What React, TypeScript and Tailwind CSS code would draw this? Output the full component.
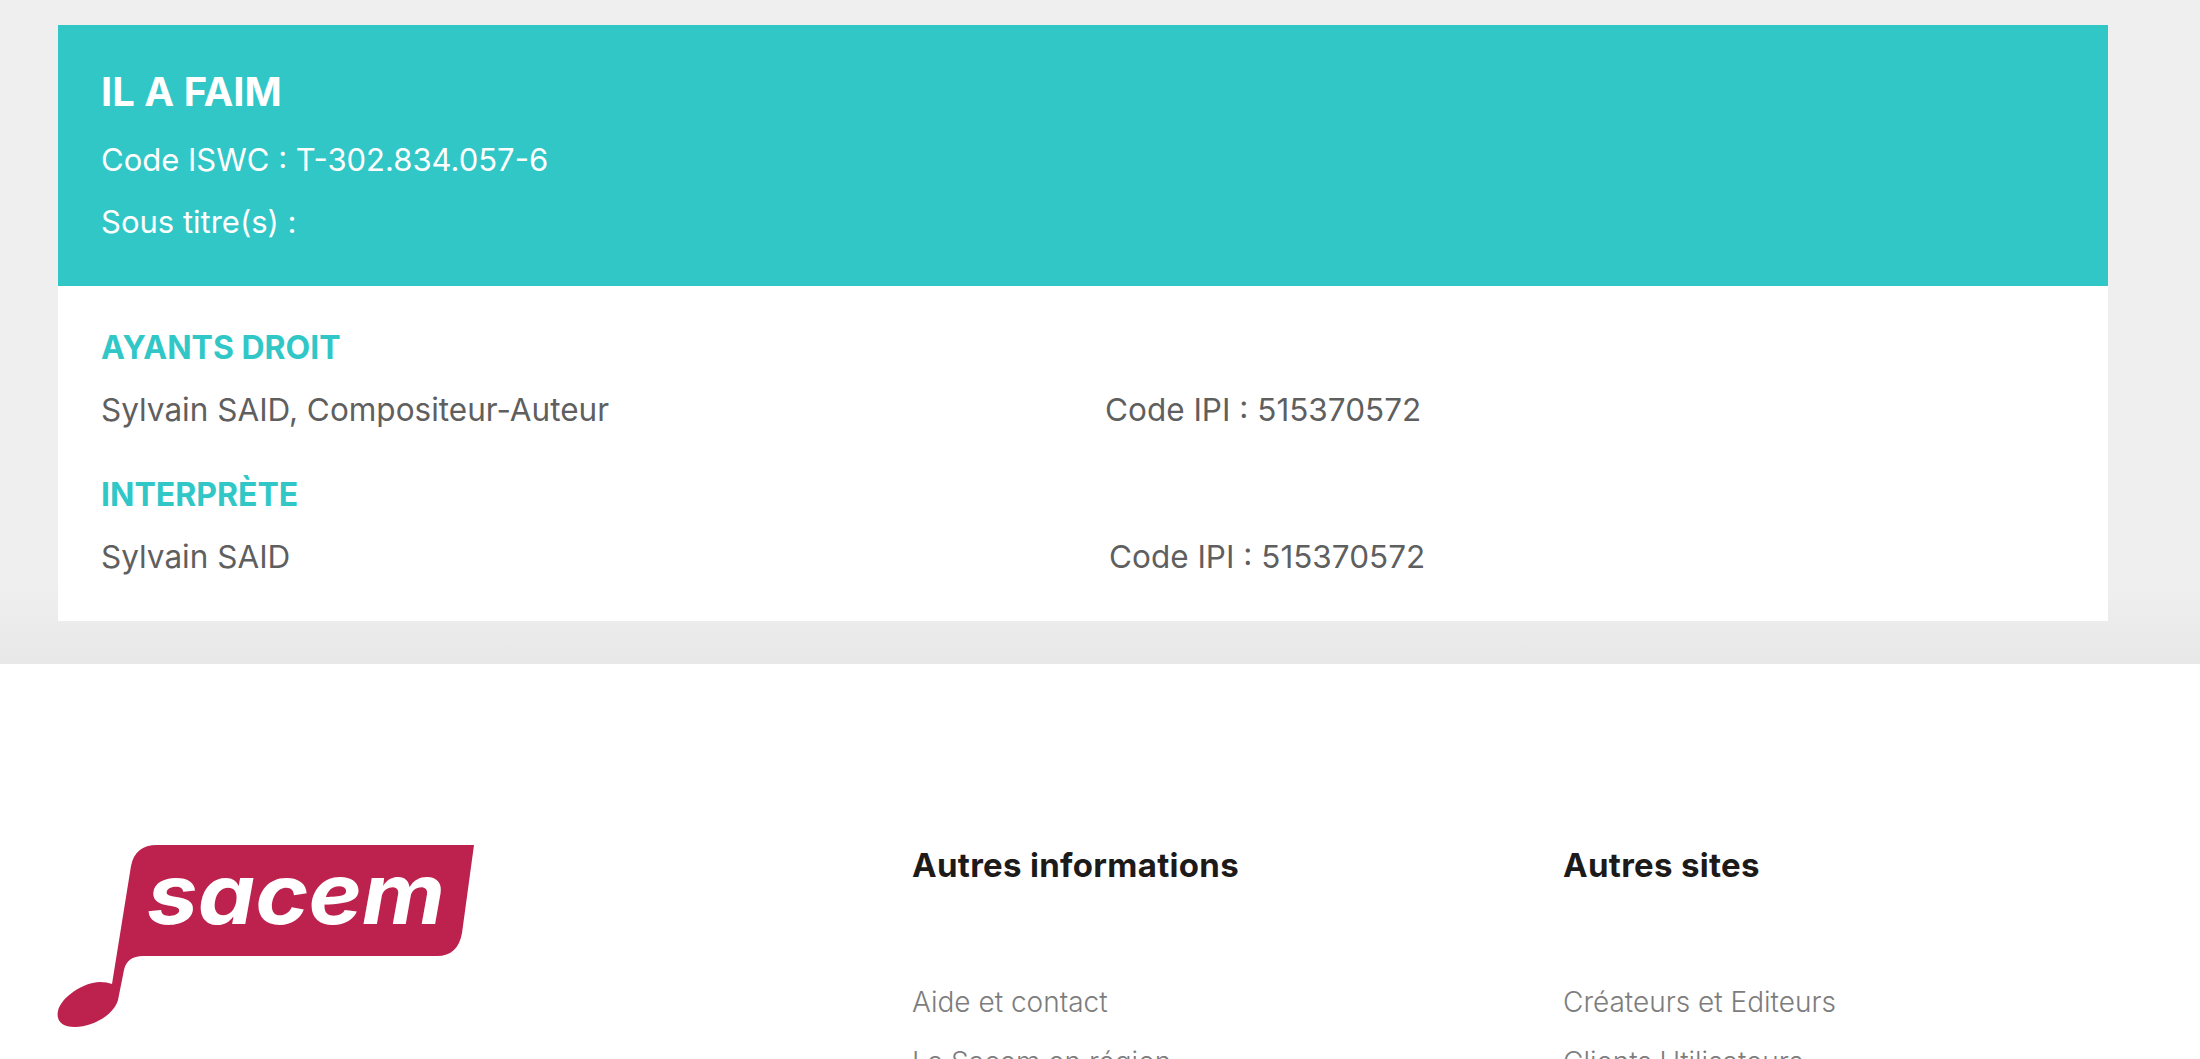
const sans = "font-['Inter','Liberation_Sans',sans-serif]";

function SacemLogo() {
  return (
    <svg width="418" height="183" viewBox="0 0 418 183" className="block overflow-visible">
      <path
        d="M100 0 H417 L405 88 Q401 111 380 111 H86 Q70 111 67 125 L61 155 C57 170 35 182 18 182 C4 182 -1 175 1 166 C4 152 27 137 43 137 Q50 137 55 139 L74 21 Q78 0 100 0 Z"
        fill="#bd214d"
      />
      <text
        x="90"
        y="79"
        fill="#ffffff"
        fontFamily="'Inter', sans-serif"
        fontWeight="700"
        fontStyle="italic"
        fontSize="84"
        textLength="298"
        lengthAdjust="spacingAndGlyphs"
      >
        sacem
      </text>
    </svg>
  );
}

function Person({ name, width }: { name: string; width: string }) {
  return (
    <div className="flex text-[31.5px] leading-[36px] text-[#5f5f5f]">
      <span className={width}>{name}</span>
      <span>Code IPI : 515370572</span>
    </div>
  );
}

function FooterColumn({ title, links, width }: { title: string; links: string[]; width: string }) {
  return (
    <div className={width}>
      <h3 className="text-[33px] leading-[36px] font-bold tracking-[0.3px] text-[#1d1a1a]">{title}</h3>
      <ul className="mt-[101px] flex flex-col gap-[24px] text-[28px] leading-[36px] font-light text-[#7d7d7d]">
        {links.map((link) => (
          <li key={link}>{link}</li>
        ))}
      </ul>
    </div>
  );
}

export default function App() {
  return (
    <div className={`h-screen overflow-hidden bg-white ${sans}`}>
      <main className="h-[664px] bg-gradient-to-b from-[#efefef] from-[88%] to-[#e8e8e8] pt-[25px] pl-[58px]">
        <section className="w-[2050px]">
          <header className="h-[261px] bg-[#31c7c7] pt-[43px] pl-[43px] text-white">
            <h1 className="text-[40px] leading-[48px] font-bold">IL A FAIM</h1>
            <p className="mt-[26px] text-[31px] leading-[36px]">Code ISWC : T-302.834.057-6</p>
            <p className="mt-[26px] text-[31px] leading-[36px]">Sous titre(s) :</p>
          </header>
          <div className="h-[335px] bg-white pt-[44px] pl-[43px]">
            <h2 className="text-[32px] leading-[36px] font-bold text-[#31c7c7]">AYANTS DROIT</h2>
            <div className="mt-[26px]">
              <Person name="Sylvain SAID, Compositeur-Auteur" width="w-[1004px]" />
            </div>
            <h2 className="mt-[49px] text-[32px] leading-[36px] font-bold text-[#31c7c7]">INTERPRÈTE</h2>
            <div className="mt-[26px]">
              <Person name="Sylvain SAID" width="w-[1008px]" />
            </div>
          </div>
        </section>
      </main>
      <footer className="flex pt-[181px] pl-[57px]">
        <div className="w-[855px]">
          <SacemLogo />
        </div>
        <div className="flex pt-[2px]">
          <FooterColumn
            title="Autres informations"
            links={["Aide et contact", "La Sacem en région"]}
            width="w-[651px]"
          />
          <FooterColumn title="Autres sites" links={["Créateurs et Editeurs", "Clients Utilisateurs"]} width="w-[500px]" />
        </div>
      </footer>
    </div>
  );
}
